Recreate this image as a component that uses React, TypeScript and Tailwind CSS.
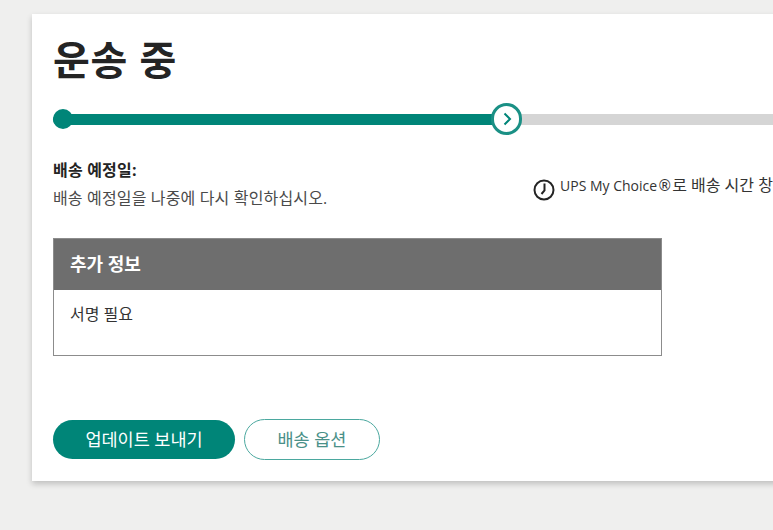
export default function App() {
  return (
    <div className="h-[530px] w-[773px] overflow-hidden bg-[#efefee] pt-[14px] pl-[32px] font-['Open_Sans','Noto_Sans_CJK_KR',sans-serif] text-[#242424]">
      <div className="h-[467px] w-[1000px] bg-white pt-[21px] pl-[21px] shadow-[0_3px_6px_rgba(0,0,0,0.2)]">
        <h1 className="text-[40px] leading-[50px] font-bold tracking-[0.8px]">운송 중</h1>

        <div className="relative mt-[18px] flex h-[32px] items-center">
          <div className="h-[11px] w-[440px] rounded-l-full bg-[#008578]" />
          <div className="h-[11px] flex-1 bg-[#d5d5d5]" />
          <div className="absolute top-[6px] left-0 h-[20px] w-[20px] rounded-full bg-[#008578]" />
          <div className="absolute top-0 left-[438px] flex h-[32px] w-[31px] items-center justify-center rounded-full border-[3px] border-[#1a9085] bg-white">
            <svg width="10" height="14" viewBox="0 0 10 14" fill="none" stroke="#008578" strokeWidth="2">
              <path d="M2.5 1.5 L8 7 L2.5 12.5" />
            </svg>
          </div>
        </div>

        <div className="mt-[23px] flex">
          <div className="w-[480px]">
            <p className="text-[16px] leading-[24px] font-bold tracking-[0.2px]">배송 예정일:</p>
            <p className="mt-[4px] text-[16px] leading-[24px] tracking-[0.15px] text-[#4a4a4a]">
              배송 예정일을 나중에 다시 확인하십시오.
            </p>
          </div>
          <div className="mt-[15px] flex h-[24px] items-center gap-[5px] whitespace-nowrap text-[#333333]">
            <svg width="22" height="22" viewBox="0 0 22 22" fill="none" stroke="#242424" strokeWidth="2" className="mt-[10px] shrink-0">
              <circle cx="11" cy="11" r="9.5" />
              <path d="M11.5 4.5 L11.5 11.5 L8.5 15" />
            </svg>
            <span className="text-[16px] leading-[24px]">
              <span className="text-[14px]">UPS My Choice</span>
              <span className="font-['DejaVu_Sans'] text-[15px]">®</span>로 배송 시간 창 확인
            </span>
          </div>
        </div>

        <div className="mt-[28px] h-[118px] w-[609px] border border-[#8c8c8c]">
          <div className="flex h-[51px] items-center bg-[#6e6e6e] px-[16px] text-[18px] font-bold text-white">추가 정보</div>
          <p className="px-[16px] pt-[12px] text-[16px] leading-[24px] text-[#333333]">서명 필요</p>
        </div>

        <div className="mt-[63px] flex items-center gap-[9px]">
          <button className="flex h-[39px] w-[182px] items-center justify-center rounded-full bg-[#008578] text-[17.5px] text-white">
            업데이트 보내기
          </button>
          <button className="flex h-[41px] w-[136px] items-center justify-center rounded-full border border-[#4ba89f] bg-white text-[17.5px] text-[#4a9088]">
            배송 옵션
          </button>
        </div>
      </div>
    </div>
  );
}
